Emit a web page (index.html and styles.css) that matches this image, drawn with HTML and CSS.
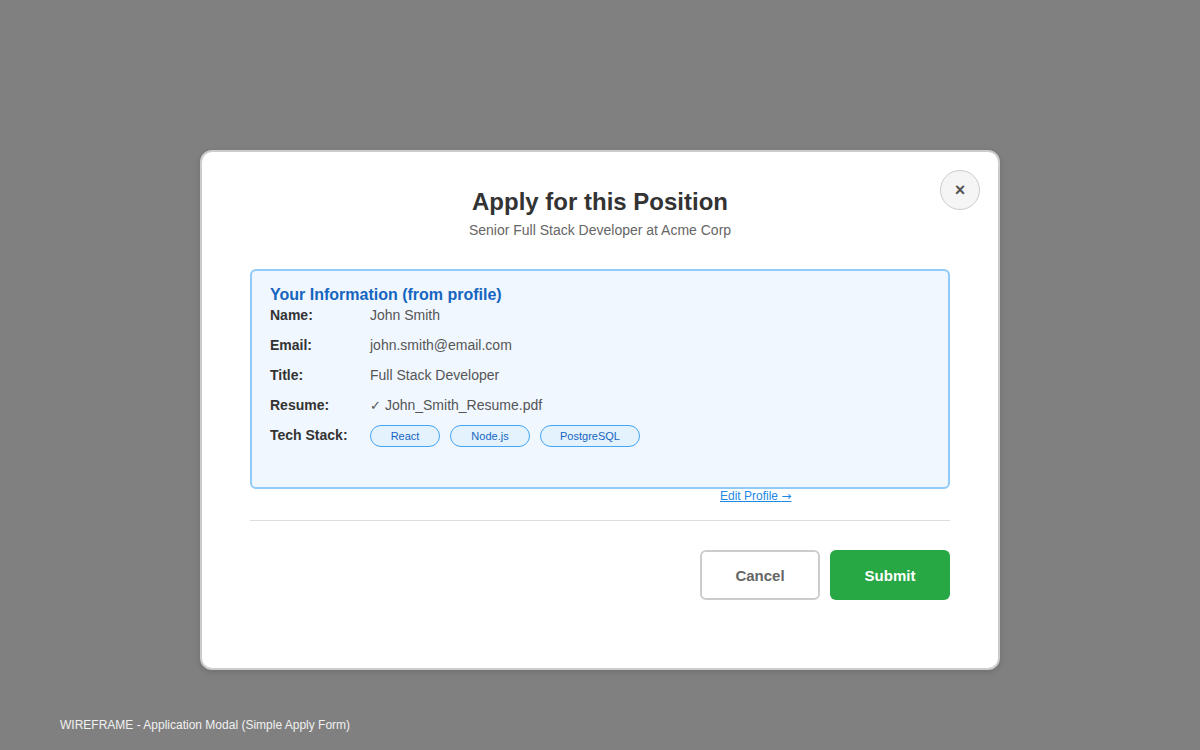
FILE: index.html
```html
<!DOCTYPE html>
<html lang="en">
<head>
<meta charset="utf-8">
<title>Application Modal</title>
<link rel="stylesheet" href="styles.css">
</head>
<body>
<div class="page">
  <div class="modal">
    <button class="close" type="button">×</button>
    <h1 class="title">Apply for this Position</h1>
    <p class="subtitle">Senior Full Stack Developer at Acme Corp</p>

    <div class="info">
      <h2 class="info-heading">Your Information (from profile)</h2>
      <div class="row"><span class="label">Name:</span><span class="value">John Smith</span></div>
      <div class="row"><span class="label">Email:</span><span class="value">john.smith@email.com</span></div>
      <div class="row"><span class="label">Title:</span><span class="value">Full Stack Developer</span></div>
      <div class="row"><span class="label">Resume:</span><span class="value"><span class="check">✓</span> John_Smith_Resume.pdf</span></div>
      <div class="row"><span class="label">Tech Stack:</span>
        <span class="tags">
          <span class="tag tag-react">React</span>
          <span class="tag tag-node">Node.js</span>
          <span class="tag tag-pg">PostgreSQL</span>
        </span>
      </div>
    </div>
    <div class="edit-row"><a class="edit-link" href="#">Edit Profile <span class="arrow">→</span></a></div>

    <hr class="divider">

    <div class="actions">
      <button class="btn btn-cancel" type="button">Cancel</button>
      <button class="btn btn-submit" type="button">Submit</button>
    </div>
  </div>
  <div class="caption">WIREFRAME - Application Modal (Simple Apply Form)</div>
</div>
</body>
</html>
```

FILE: styles.css
```css
* { box-sizing: border-box; }

html, body {
  margin: 0;
  padding: 0;
}

body {
  background: #808080;
  font-family: "Liberation Sans", Arial, sans-serif;
  width: 1200px;
  height: 750px;
  overflow: hidden;
}

.page {
  padding-top: 150px;
}

.modal {
  position: relative;
  width: 800px;
  height: 520px;
  margin: 0 auto;
  background: #fff;
  border: 2px solid #cccccc;
  border-radius: 12px;
  box-shadow: 0 2px 6px rgba(0, 0, 0, 0.15);
  padding: 36px 48px 0 48px;
}

.close {
  position: absolute;
  top: 18px;
  right: 18px;
  width: 40px;
  height: 40px;
  border-radius: 50%;
  border: 1px solid #cccccc;
  background: #f5f5f5;
  color: #555;
  font-family: "Liberation Sans", Arial, sans-serif;
  font-weight: bold;
  font-size: 18px;
  line-height: 1;
  padding: 0 0 1px 0;
  display: flex;
  align-items: center;
  justify-content: center;
}

.title {
  margin: 0;
  text-align: center;
  font-size: 24px;
  font-weight: bold;
  color: #333;
}

.subtitle {
  margin: 6px 0 0 0;
  text-align: center;
  font-size: 14px;
  color: #666;
}

.info {
  margin-top: 31px;
  height: 220px;
  background: #f0f7ff;
  border: 2px solid #90caf9;
  border-radius: 6px;
  padding: 15px 18px;
}

.info-heading {
  margin: 0 0 3px 0;
  font-size: 16px;
  font-weight: bold;
  color: #1565c0;
}

.row {
  display: flex;
  align-items: baseline;
  height: 16px;
  font-size: 14px;
  margin-bottom: 14px;
}

.row:last-child { margin-bottom: 0; }

.label {
  width: 100px;
  flex: none;
  font-weight: bold;
  color: #333;
}

.value {
  color: #555;
}

.check {
  font-size: 13px;
}

.tags {
  display: flex;
  align-items: baseline;
  gap: 10px;
  margin-top: -2px;
}

.tag {
  display: inline-block;
  height: 22px;
  line-height: 20px;
  text-align: center;
  font-size: 11px;
  color: #1565c0;
  background: #e3f2fd;
  border: 1px solid #42a5f5;
  border-radius: 11px;
}

.tag-react { width: 70px; }
.tag-node { width: 80px; }
.tag-pg { width: 100px; }

.edit-row {
  padding-left: 470px;
  font-size: 12px;
  line-height: 14px;
}

.edit-link {
  color: #1e88e5;
  text-decoration: underline;
}

.arrow {
  font-family: "DejaVu Sans", sans-serif;
  font-size: 12px;
}

.divider {
  margin: 17px 0 0 0;
  border: 0;
  border-top: 1px solid #dddddd;
  height: 0;
}

.actions {
  margin-top: 29px;
  display: flex;
  justify-content: flex-end;
  gap: 10px;
}

.btn {
  width: 120px;
  height: 50px;
  border-radius: 6px;
  font-family: "Liberation Sans", Arial, sans-serif;
  font-size: 15px;
  font-weight: bold;
  cursor: pointer;
}

.btn-cancel {
  background: #fff;
  color: #666;
  border: 2px solid #cccccc;
}

.btn-submit {
  background: #28a745;
  color: #fff;
  border: 0;
}

.caption {
  margin-top: 48px;
  padding-left: 60px;
  font-size: 12px;
  color: #f0f0f0;
}
```
